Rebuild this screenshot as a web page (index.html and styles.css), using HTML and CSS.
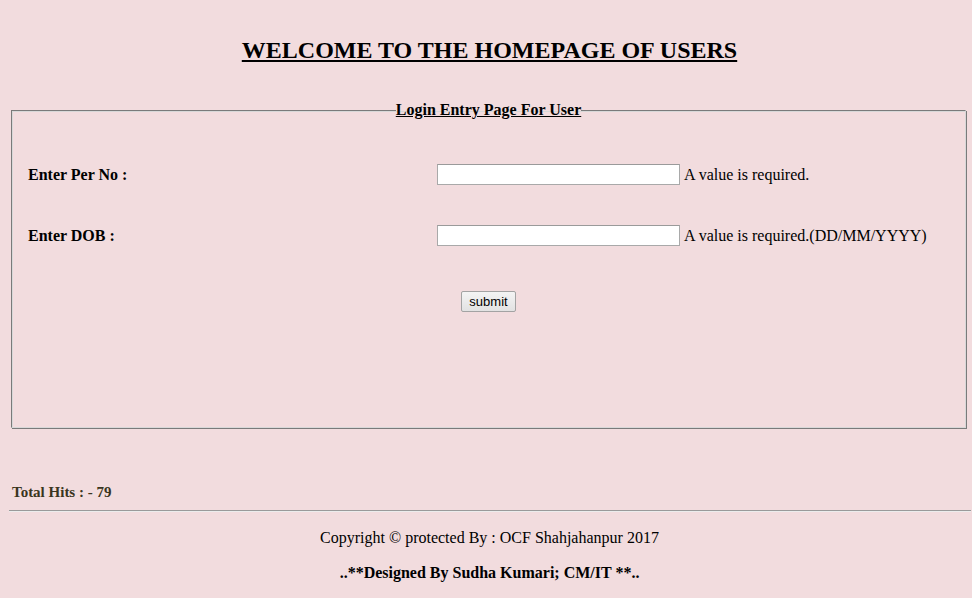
FILE: index.html
```html
<!DOCTYPE html>
<html>
<head>
<meta charset="utf-8">
<title>Welcome</title>
<link rel="stylesheet" href="styles.css">
</head>
<body>
<h2 class="title">WELCOME TO THE HOMEPAGE OF USERS</h2>
<fieldset class="box">
  <legend class="legend">Login Entry Page For User</legend>
  <div class="form">
    <div class="row">
      <div class="label">Enter Per No :</div>
      <div class="field"><input class="input" type="text"><span class="msg">A value is required.</span></div>
    </div>
    <div class="row row2">
      <div class="label">Enter DOB :</div>
      <div class="field"><input class="input" type="text"><span class="msg">A value is required.(DD/MM/YYYY)</span></div>
    </div>
    <div class="actions"><button class="btn" type="button">submit</button></div>
  </div>
</fieldset>
<div class="hits">Total Hits : - 79</div>
<hr class="rule">
<p class="copy">Copyright © protected By : OCF Shahjahanpur 2017</p>
<p class="design">..**Designed By Sudha Kumari; CM/IT **..</p>
</body>
</html>
```
FILE: styles.css
```css
html, body {
  background: #f2dcde;
}
body {
  margin: 0 1px 0 8px;
  font-family: "Liberation Serif", "Times New Roman", serif;
  font-size: 16px;
  color: #000;
  overflow: hidden;
}
.title {
  margin: 36px 0 0;
  text-align: center;
  font-size: 24px;
  line-height: 28px;
  font-weight: bold;
  text-decoration: underline;
}
.box {
  margin: 37px 5px 0 3px;
  padding: 0 12px 115px;
  border-color: #7a7a7a #d8d8d8 #d8d8d8 #7a7a7a;
  border-style: solid;
  border-width: 1px;
  box-shadow: inset 1px 1px 0 #d8d8d8, 1px 1px 0 #7a7a7a;
}
.legend {
  margin: 0 auto;
  padding: 0;
  font-weight: bold;
  text-decoration: underline;
  line-height: 18px;
}
.form {
  padding-top: 45px;
}
.row {
  display: grid;
  grid-template-columns: 413px 1fr;
  align-items: center;
  height: 21px;
}
.row2 {
  margin-top: 40px;
}
.label {
  padding-left: 4px;
  font-weight: bold;
}
.field {
  display: flex;
  align-items: center;
}
.input {
  box-sizing: border-box;
  width: 243px;
  height: 21px;
  margin: 0;
  padding: 1px 2px;
  background: #fff;
  border: 1px solid #a9a9a9;
  border-top-color: #9a9a9a;
}
.msg {
  margin-left: 4px;
}
.actions {
  margin-top: 45px;
  display: flex;
  justify-content: center;
}
.btn {
  box-sizing: border-box;
  width: 55px;
  height: 21px;
  padding: 0;
  font-family: "Liberation Sans", Arial, sans-serif;
  font-size: 13px;
  color: #000;
  background: linear-gradient(#f4f4f4, #e2e2e2);
  border: 1px solid #a3a3a3;
  border-radius: 2px;
}
.hits {
  margin: 55px 0 0 4px;
  font-size: 15px;
  line-height: 18px;
  font-weight: bold;
  color: #3a3520;
}
.rule {
  margin: 9px -1px 0 1px;
  border: 0;
  border-top: 1px solid #9a9a9a;
  border-bottom: 1px solid #ececec;
  height: 0;
}
.copy {
  margin: 17px 0 0;
  text-align: center;
  line-height: 18px;
}
.design {
  margin: 17px 0 0;
  text-align: center;
  line-height: 18px;
  font-weight: bold;
}
```
